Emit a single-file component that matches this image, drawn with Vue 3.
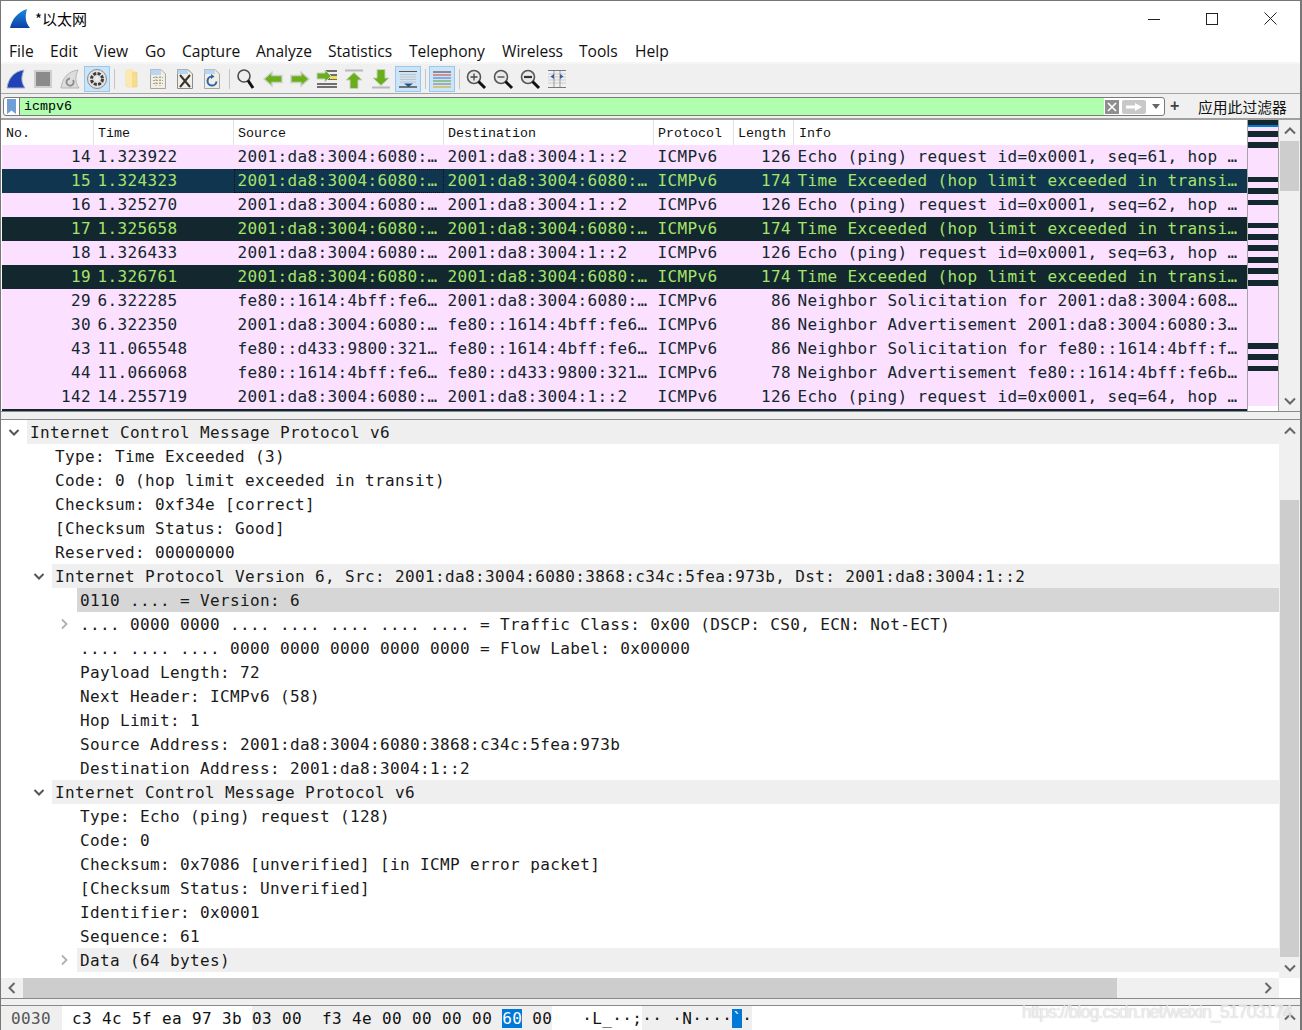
<script setup>
const menus = ['File','Edit','View','Go','Capture','Analyze','Statistics','Telephony','Wireless','Tools','Help']
const s1 = '2001:da8:3004:6080:…', s2 = '2001:da8:3004:1::2', ll = 'fe80::1614:4bff:fe6…', ll2 = 'fe80::d433:9800:321…'
const echo = n => `Echo (ping) request id=0x0001, seq=${n}, hop …`
const te = 'Time Exceeded (hop limit exceeded in transi…'
const packets = [
  ['14','1.323922',s1,s2,'126',echo(61),''],
  ['15','1.324323',s1,s1,'174',te,'sel'],
  ['16','1.325270',s1,s2,'126',echo(62),''],
  ['17','1.325658',s1,s1,'174',te,'bad'],
  ['18','1.326433',s1,s2,'126',echo(63),''],
  ['19','1.326761',s1,s1,'174',te,'bad'],
  ['29','6.322285',ll,s1,'86','Neighbor Solicitation for 2001:da8:3004:608…',''],
  ['30','6.322350',s1,ll,'86','Neighbor Advertisement 2001:da8:3004:6080:3…',''],
  ['43','11.065548',ll2,ll,'86','Neighbor Solicitation for fe80::1614:4bff:f…',''],
  ['44','11.066068',ll,ll2,'78','Neighbor Advertisement fe80::1614:4bff:fe6b…',''],
  ['142','14.255719',s1,s2,'126',echo(64),''],
  ['','','','','','','bad'],
]
const stripes = [[0,5],[11,6],[22,6],[57,5],[68,6],[80,5],[103,5],[114,6],[125,6],[137,6],[148,6],[160,6],[223,6],[234,6],[246,5]]
const tree = [
  [0,'open','Internet Control Message Protocol v6','hl'],
  [1,'','Type: Time Exceeded (3)'],
  [1,'','Code: 0 (hop limit exceeded in transit)'],
  [1,'','Checksum: 0xf34e [correct]'],
  [1,'','[Checksum Status: Good]'],
  [1,'','Reserved: 00000000'],
  [1,'open','Internet Protocol Version 6, Src: 2001:da8:3004:6080:3868:c34c:5fea:973b, Dst: 2001:da8:3004:1::2','hl'],
  [2,'','0110 .... = Version: 6','cur'],
  [2,'closed','.... 0000 0000 .... .... .... .... .... = Traffic Class: 0x00 (DSCP: CS0, ECN: Not-ECT)'],
  [2,'','.... .... .... 0000 0000 0000 0000 0000 = Flow Label: 0x00000'],
  [2,'','Payload Length: 72'],
  [2,'','Next Header: ICMPv6 (58)'],
  [2,'','Hop Limit: 1'],
  [2,'','Source Address: 2001:da8:3004:6080:3868:c34c:5fea:973b'],
  [2,'','Destination Address: 2001:da8:3004:1::2'],
  [1,'open','Internet Control Message Protocol v6','hl'],
  [2,'','Type: Echo (ping) request (128)'],
  [2,'','Code: 0'],
  [2,'','Checksum: 0x7086 [unverified] [in ICMP error packet]'],
  [2,'','[Checksum Status: Unverified]'],
  [2,'','Identifier: 0x0001'],
  [2,'','Sequence: 61'],
  [2,'closed','Data (64 bytes)','hl'],
]
const hexA = ' c3 4c 5f ea 97 3b '
const hexB = '03 00  f3 4e 00 00 00 00 '
const hexC = ' 00'
const ascA = '·L_··;'
const ascB = '·· ·N····'
</script>

<template>
  <div class="win">
    <header class="title">
      <svg class="logo" width="20" height="20" viewBox="0 0 20 20">
        <defs><linearGradient id="fin" x1="0" y1="0" x2="0" y2="1"><stop offset="0" stop-color="#1f8ae0"/><stop offset="1" stop-color="#0b3fa8"/></linearGradient></defs>
        <path d="M0 19C2 10 8 3 17 0C15 7 15 13 20 19Z" fill="url(#fin)"/>
      </svg>
      <span class="wintitle">*以太网</span>
      <div class="winbtns">
        <svg width="12" height="12" viewBox="0 0 12 12"><path d="M0 6.500H12" stroke="#222" fill="none"/></svg>
        <svg width="12" height="12" viewBox="0 0 12 12"><rect x=".5" y=".5" width="11" height="11" stroke="#222" fill="none"/></svg>
        <svg width="13" height="13" viewBox="0 0 13 13"><path d="M.5.5L12.500 12.500M12.500.5L.5 12.500" stroke="#222" fill="none"/></svg>
      </div>
    </header>
    <nav class="menu"><span v-for="m in menus" :key="m">{{ m }}</span></nav>

    <div class="tools">
      <span class="tb"><svg viewBox="0 0 22 22"><path d="M2 20C3 11 9 3 19 2C16 9 16 14 20 20Z" fill="#2143b8" stroke="#a9b0c4"/></svg></span>
      <span class="tb"><svg viewBox="0 0 22 22"><rect x="3" y="3" width="16" height="16" fill="#8b8b8b" stroke="#cfcfcf" stroke-width="2"/></svg></span>
      <span class="tb"><svg viewBox="0 0 22 22"><path d="M2 20C3 11 9 3 19 2C16 9 16 14 20 20Z" fill="#dcdcdc" stroke="#b5b5b5"/><path d="M14 12a3.600 3.600 0 1 1-3-1.500" fill="none" stroke="#8b8b8b" stroke-width="1.800"/></svg></span>
      <span class="tb on"><svg viewBox="0 0 22 22"><circle cx="11" cy="11" r="9.500" fill="#e3e3e3" stroke="#8b8b8b"/><circle cx="11" cy="11" r="5.500" fill="none" stroke="#3c3c3c" stroke-width="3" stroke-dasharray="3 1.300"/><circle cx="11" cy="11" r="2" fill="#eee"/></svg></span>
      <i class="sep"></i>
      <span class="tb"><svg viewBox="0 0 22 22"><path d="M6 3L12 1.500V4H17V19H8L6 18Z" fill="#f7dc8c" stroke="#ecd087" stroke-width=".6"/><path d="M6 3L12 1.500V20L6 18Z" fill="#fbe9ae"/></svg></span>
      <span class="tb"><svg viewBox="0 0 22 22"><path d="M3.500 1.500H14L18.500 6V20.500H3.500Z" fill="#f2efe2" stroke="#a7a7a7"/><path d="M3.500 1.500H14V7H3.500Z" fill="#b9d6f0"/><path d="M6 9.500H16M6 12.500H16M6 15.500H16M9 8V18M13 8V18" stroke="#a8a68f" stroke-dasharray="2 1" fill="none"/></svg></span>
      <span class="tb"><svg viewBox="0 0 22 22"><path d="M3.500 1.500H14L18.500 6V20.500H3.500Z" fill="#f2efe2" stroke="#8b8b8b"/><path d="M3.500 1.500H14V6H3.500Z" fill="#b9d6f0"/><path d="M6 7L16 19M16 7L6 19" stroke="#333" stroke-width="2" fill="none"/></svg></span>
      <span class="tb"><svg viewBox="0 0 22 22"><path d="M3.500 1.500H14L18.500 6V20.500H3.500Z" fill="#f2efe2" stroke="#a7a7a7"/><path d="M3.500 1.500H14V6H3.500Z" fill="#b9d6f0"/><path d="M15.500 13.500a4.500 4.500 0 1 1-4.500-5" fill="none" stroke="#2b62b5" stroke-width="2"/><path d="M10 6L13.500 8.500L10 11Z" fill="#2b62b5"/></svg></span>
      <i class="sep"></i>
      <span class="tb"><svg viewBox="0 0 22 22"><circle cx="9" cy="8" r="6" fill="#eef0f0" stroke="#4d4d4d" stroke-width="1.600"/><path d="M13 12.500L18 20" stroke="#111" stroke-width="3"/></svg></span>
      <span class="tb"><svg viewBox="0 0 22 22"><path d="M2 11L10 4V7.500H20V14.500H10V18Z" fill="#6bae1c" stroke="#c9d0c4" stroke-width="1.400"/></svg></span>
      <span class="tb"><svg viewBox="0 0 22 22"><path d="M20 11L12 4V7.500H2V14.500H12V18Z" fill="#6bae1c" stroke="#c9d0c4" stroke-width="1.400"/></svg></span>
      <span class="tb"><svg viewBox="0 0 22 22"><path d="M9 3H21M12 7H21M12 11H21M1 16H21M1 19H21" stroke="#444" stroke-width="1.400" fill="none"/><rect x="14" y="8" width="7" height="3" fill="#f2df4a"/><path d="M15 8L9 2V5H1V11H9V14Z" fill="#6bae1c" stroke="#c9d0c4"/></svg></span>
      <span class="tb"><svg viewBox="0 0 22 22"><path d="M2 2.500H20" stroke="#b9b9b9" stroke-width="2"/><path d="M11 4.500L19 12H15V20.500H7V12H3Z" fill="#6bae1c" stroke="#c9d0c4"/></svg></span>
      <span class="tb"><svg viewBox="0 0 22 22"><path d="M2 19.500H20" stroke="#b9b9b9" stroke-width="2"/><path d="M11 17.500L19 10H15V1.500H7V10H3Z" fill="#6bae1c" stroke="#c9d0c4"/></svg></span>
      <span class="tb on"><svg viewBox="0 0 22 22"><path d="M2 3.500H20" stroke="#555"/><path d="M3 6.500H19M3 9H19M3 11.500H19M3 14H19" stroke="#c4c4c4"/><path d="M2 19H20" stroke="#444" stroke-width="1.400"/><path d="M7 15.500H16L11.500 19Z" fill="#27508f"/></svg></span>
      <i class="sep"></i>
      <span class="tb on"><svg viewBox="0 0 22 22"><path d="M2 4H20" stroke="#555" stroke-width="1.200"/><path d="M2 7H20" stroke="#d9534f" stroke-width="1.200"/><path d="M2 10H20" stroke="#5b87c7" stroke-width="1.200"/><path d="M2 13H20" stroke="#68a94a" stroke-width="1.200"/><path d="M2 16H20" stroke="#888" stroke-width="1.200"/><path d="M2 19H20" stroke="#d4b02c" stroke-width="1.200"/></svg></span>
      <i class="sep"></i>
      <span class="tb"><svg viewBox="0 0 22 22"><circle cx="9" cy="9" r="6.500" fill="#e9e9e9" stroke="#555" stroke-width="1.600"/><path d="M5.500 9H12.500M9 5.500V12.500" stroke="#444" stroke-width="1.300"/><path d="M13.500 13.500L20 20" stroke="#111" stroke-width="3"/></svg></span>
      <span class="tb"><svg viewBox="0 0 22 22"><circle cx="9" cy="9" r="6.500" fill="#e9e9e9" stroke="#555" stroke-width="1.600"/><path d="M5.500 9H12.500" stroke="#444" stroke-width="1.300"/><path d="M13.500 13.500L20 20" stroke="#111" stroke-width="3"/></svg></span>
      <span class="tb"><svg viewBox="0 0 22 22"><circle cx="9" cy="9" r="6.500" fill="#e9e9e9" stroke="#555" stroke-width="1.600"/><path d="M5 9H13" stroke="#333" stroke-width="2.200"/><path d="M13.500 13.500L20 20" stroke="#111" stroke-width="3"/></svg></span>
      <span class="tb"><svg viewBox="0 0 22 22"><path d="M2 2.500H20M2 19.500H20" stroke="#777" stroke-width="1.200"/><path d="M2 6H20M2 9H20M2 12H20M2 15H20" stroke="#ccc"/><path d="M8 3V19M14 3V19" stroke="#999"/><path d="M8 6L4.500 8.500L8 11ZM14 6L17.500 8.500L14 11Z" fill="#2a62b0"/></svg></span>
    </div>

    <div class="filter">
      <div class="field">
        <span class="mark"><svg width="9" height="15" viewBox="0 0 9 15"><path d="M0 0H9V15L4.500 11.500L0 15Z" fill="#6f9fd6"/></svg></span>
        <span class="ftext">icmpv6</span>
        <span class="fx"><svg width="14" height="14" viewBox="0 0 14 14"><rect width="14" height="14" fill="#8e8e8e"/><path d="M3 3L11 11M11 3L3 11" stroke="#fff" stroke-width="1.600"/></svg></span>
        <span class="fgo"><svg width="24" height="14" viewBox="0 0 24 14"><rect width="24" height="14" rx="2" fill="#c8c8c8"/><path d="M4 5.500H13V3L20 7L13 11V8.500H4Z" fill="#fff"/></svg></span>
        <span class="fdd"><svg width="8" height="5" viewBox="0 0 8 5"><path d="M0 0H8L4 5Z" fill="#666"/></svg></span>
      </div>
      <span class="plus">+</span>
      <span class="apply">应用此过滤器</span>
    </div>

    <section class="list">
      <div class="listmain">
        <div class="phead">
          <span>No.</span><span>Time</span><span>Source</span><span>Destination</span><span>Protocol</span><span>Length</span><span>Info</span>
        </div>
        <div v-for="(p, i) in packets" :key="i" class="prow" :class="p[6]">
          <span class="num">{{ p[0] }}</span><span>{{ p[1] }}</span>
          <span :class="{ focus: i === 1 }">{{ p[2] }}</span><span>{{ p[3] }}</span>
          <span>{{ p[0] ? 'ICMPv6' : '' }}</span><span class="num">{{ p[4] }}</span><span>{{ p[5] }}</span>
        </div>
      </div>
      <div class="mini">
        <i v-for="(s, i) in stripes" :key="i" :style="{ top: s[0] + 'px', height: s[1] + 'px' }"></i>
        <b></b>
      </div>
      <div class="vbar">
        <svg class="chev" viewBox="0 0 12 8"><path d="M1 6.500L6 1.500L11 6.500" /></svg>
        <div class="track"><div class="thumb listthumb"></div></div>
        <svg class="chev" viewBox="0 0 12 8"><path d="M1 1.500L6 6.500L11 1.500" /></svg>
      </div>
    </section>

    <div class="split"></div>

    <section class="details">
      <div class="tree">
        <div v-for="(r, i) in tree" :key="i" class="node" :class="'l' + r[0]">
          <svg v-if="r[1] === 'open'" class="tw" viewBox="0 0 12 12"><path d="M1.500 4L6 8.500L10.500 4" stroke="#555" stroke-width="2" fill="none"/></svg>
          <svg v-else-if="r[1] === 'closed'" class="tw" viewBox="0 0 12 12"><path d="M4 1.500L8.500 6L4 10.500" stroke="#b0b0b0" stroke-width="1.800" fill="none"/></svg>
          <span v-else class="tw"></span>
          <span class="ntext" :class="r[3]">{{ r[2] }}</span>
        </div>
      </div>
      <div class="vbar">
        <svg class="chev" viewBox="0 0 12 8"><path d="M1 6.500L6 1.500L11 6.500" /></svg>
        <div class="track"><div class="thumb treethumb"></div></div>
        <svg class="chev" viewBox="0 0 12 8"><path d="M1 1.500L6 6.500L11 1.500" /></svg>
      </div>
    </section>

    <div class="hbar">
      <svg viewBox="0 0 8 12" class="hchev"><path d="M6.500 1L1.500 6L6.500 11"/></svg>
      <div class="htrack"><div class="hthumb"></div></div>
      <svg viewBox="0 0 8 12" class="hchev"><path d="M1.500 1L6.500 6L1.500 11"/></svg>
    </div>

    <div class="split2"></div>

    <section class="hex">
      <div class="hexbody">
        <span class="off">0030</span>
        <span class="hw">{{ hexA }}</span><span class="hg">{{ hexB }}<em>60</em>{{ hexC }}</span>
        <span class="gap"></span>
        <span class="hw">{{ ascA }}</span><span class="hg">{{ ascB }}<em>`</em>·</span>
      </div>
      <div class="hexbar"><svg class="chev" viewBox="0 0 12 8"><path d="M1 6.500L6 1.500L11 6.500" /></svg></div>
    </section>

    <div class="watermark">https://blog.csdn.net/weixin_51703174</div>
  </div>
</template>

<style scoped>
.win { position: relative; box-sizing: border-box; width: 1302px; height: 1030px; border: solid #777; border-width: 1px 2px 0 1px; background: #fff; overflow: hidden; font-family: "Open Sans", sans-serif; color: #000; }
.title { height: 37px; display: flex; align-items: center; padding-left: 9px; }
.logo { margin-right: 5px; margin-top: -1px; }
.wintitle { font: 15px "Noto Sans CJK SC", sans-serif; margin-top: -3px; }
.winbtns { margin-left: auto; display: flex; align-items: center; gap: 46px; padding-right: 23px; margin-top: -2px; }
.menu { height: 22px; padding: 2px 0 0 8px; display: grid; grid-template-columns: 41px 44px 51px 37px 74px 72px 81px 93px 77px 56px 50px; justify-content: start; align-items: center; font-size: 15.6px; color: #111; border-bottom: 2px solid #f6f6f6; box-sizing: content-box; }
.tools { height: 29px; display: flex; align-items: center; padding-left: 2px; background: #f0f0f0; border-bottom: 1px solid #a5a5a5; }
.tb { width: 26px; height: 26px; margin-right: 1px; display: flex; align-items: center; justify-content: center; box-sizing: border-box; border: 1px solid transparent; }
.tb svg { width: 22px; height: 22px; }
.tb.on { background: #cce4f7; border-color: #98c8ee; }
.sep { width: 1px; height: 20px; background: #c4c4c4; margin: 0 3px; }
.filter { height: 24px; background: #f0f0f0; display: flex; align-items: center; border-bottom: 2px solid #a0a0a0; box-sizing: content-box; }
.field { width: 1162px; height: 19px; margin: 1px 0 0 2px; display: flex; align-items: center; border: 1px solid #7a7a7a; border-radius: 3px; box-sizing: border-box; background: #fff; }
.mark { width: 16px; height: 100%; display: flex; align-items: center; justify-content: center; border-right: 1px solid #7a7a7a; box-sizing: border-box; }
.ftext { flex: 1; height: 100%; background: #afffaf; font: 13.33px/17px "Liberation Mono", monospace; padding-left: 4px; box-sizing: border-box; }
.fx { width: 16px; height: 100%; display: flex; align-items: center; justify-content: center; }
.fgo { width: 26px; display: flex; justify-content: center; margin-left: 1px; }
.fdd { width: 17px; display: flex; justify-content: center; }
.plus { margin-left: 5px; width: 12px; font: bold 16px/16px "Liberation Sans", sans-serif; color: #444; }
.apply { margin-left: 16px; font: 14.8px "Noto Sans CJK SC", sans-serif; color: #111; }

.list { height: 292px; display: flex; border-bottom: 1px solid #8a8a8a; box-sizing: border-box; overflow: hidden; padding-left: 1px; }
.listmain { width: 1245px; overflow: hidden; border-right: 1px solid #a5a5a5; }
.phead, .prow { display: grid; grid-template-columns: 92px 140px 210px 210px 80px 60px 1fr; white-space: pre; }
.phead { height: 25px; align-items: center; font: 13.33px "Liberation Mono", monospace; color: #111; }
.phead span { padding-left: 4px; height: 25px; line-height: 27px; border-right: 1px solid #e2e2e2; box-sizing: border-box; }
.phead span:last-child { border: 0; padding-left: 5px; }
.prow { height: 24px; line-height: 24px; background: #fce0ff; color: #12272e; font-family: "DejaVu Sans Mono", monospace; font-size: 16px; letter-spacing: .37px; }
.prow span { padding-left: 3.500px; overflow: hidden; box-sizing: border-box; }
.prow .num { text-align: right; padding: 0 3px 0 0; }
.prow.sel { background: #10354f; color: #a6e36b; }
.prow.bad { background: #12272e; color: #a6e36b; }
.focus { outline: 1px dotted #111; outline-offset: -1px; }
.mini { position: relative; width: 30px; background: #fce0ff; border-right: 1px solid #a5a5a5; }
.mini i { position: absolute; left: 0; right: 0; background: #12272e; }
.mini b { position: absolute; left: 0; right: 0; top: 5px; height: 2px; background: #0078d7; }
.mini::after { content: ""; position: absolute; left: 0; right: 0; top: 286px; height: 6px; background: #fff; }
.vbar { width: 21px; background: #f0f0f0; display: flex; flex-direction: column; align-items: center; }
.chev { width: 12px; height: 8px; flex: none; margin: 7px 0 6px; fill: none; stroke: #666; stroke-width: 2; }
.track { flex: 1; width: 100%; display: flex; flex-direction: column; }
.thumb { background: #cdcdcd; width: 19px; margin: 0 auto; }
.listthumb { height: 50px; }
.treethumb { height: 457px; margin-top: 59px; }
.split { height: 7px; background: #f0f0f0; border-bottom: 1px solid #8a8a8a; box-sizing: content-box; }

.details { height: 558px; display: flex; }
.tree { width: 1278px; font: 16px/24px "DejaVu Sans Mono", monospace; letter-spacing: .37px; color: #1a1a1a; white-space: pre; }
.node { height: 24px; display: flex; align-items: center; }
.tw { width: 12px; height: 12px; flex: none; margin-right: 7px; }
.l0 { padding-left: 7px; }
.l1 { padding-left: 32px; }
.l2 { padding-left: 57px; }
.ntext { flex: 1; height: 24px; line-height: 26px; padding-left: 3px; }
.ntext.hl { background: #efefef; }
.ntext.cur { background: #d6d6d6; }
.details .vbar { height: 558px; }

.hbar { height: 20px; background: #f0f0f0; display: flex; align-items: center; margin-right: 21px; }
.hchev { width: 8px; height: 12px; margin: 0 7px; fill: none; stroke: #666; stroke-width: 2; flex: none; }
.htrack { flex: 1; height: 20px; }
.hthumb { width: 1094px; height: 20px; background: #cdcdcd; margin-left: 0; }
.split2 { height: 6px; background: #f0f0f0; border-top: 1px solid #8a8a8a; border-bottom: 1px solid #8a8a8a; box-sizing: content-box; }

.hex { height: 24px; display: flex; }
.hexbody { width: 1278px; display: flex; font: 16px/26px "DejaVu Sans Mono", monospace; letter-spacing: .37px; white-space: pre; color: #111; }
.off { width: 61px; box-sizing: border-box; padding-left: 10px; background: #efefef; color: #555; flex: none; }
.hw { background: #fff; }
.hg { background: #efefef; }
.hg em { font-style: normal; background: #0078d7; color: #fff; }
.gap { width: 30px; flex: none; }
.hexbar { width: 21px; background: #f0f0f0; display: flex; justify-content: center; }
.watermark { position: absolute; left: 1021px; top: 1001px; font: 17.5px "Liberation Sans", sans-serif; letter-spacing: -.75px; color: rgba(255,255,255,.72); text-shadow: 0 0 1px rgba(120,120,120,.55); white-space: nowrap; }
</style>
